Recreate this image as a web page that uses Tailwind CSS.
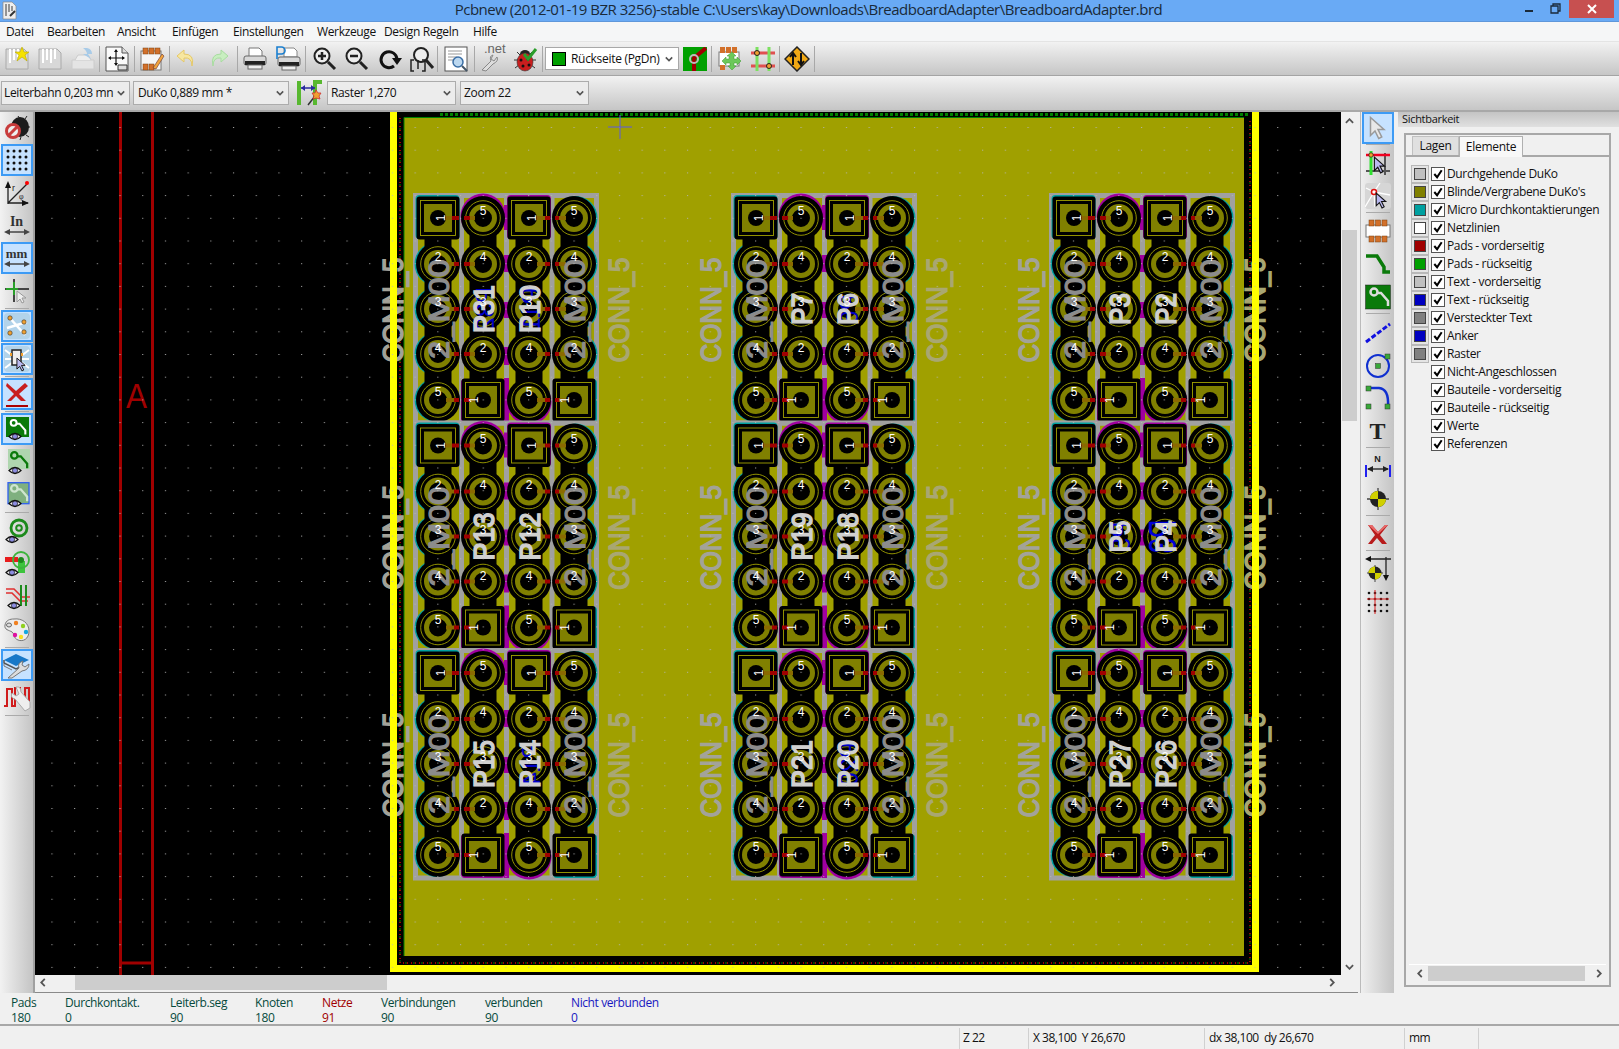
<!DOCTYPE html>
<html lang="de">
<head>
<meta charset="UTF-8">
<title>Pcbnew</title>
<script src="https://cdn.jsdelivr.net/npm/@tailwindcss/browser@4"></script>
</head>
<body class="w-[1619px] h-[1049px] overflow-hidden bg-[#f0f0f0] font-['Open_Sans','Noto_Sans',sans-serif] text-[#111]">

<svg class="hidden">
	<symbol id="chev" viewBox="0 0 10 6"><path d="M1 1l4 4 4-4" fill="none" stroke="#555" stroke-width="2"/></symbol>
	<symbol id="eye" viewBox="0 0 14 8"><path d="M1 4q6-6 12 0q-6 6-12 0z" fill="#fff" stroke="#111" stroke-width="1.2"/><circle cx="7" cy="4" r="2.6" fill="#8c8ce0" stroke="#111" stroke-width=".8"/></symbol>
	<symbol id="check" viewBox="0 0 13 13"><path d="M2.500 6.500l3 3.500 5-7.500" fill="none" stroke="#000" stroke-width="2.200"/></symbol>
	<symbol id="cursor" viewBox="0 0 12 16"><path d="M1 1v12l3-3 2.500 5 2-1-2.500-5h4z" fill="#b9b9f0" stroke="#111" stroke-width="1"/></symbol>
	<symbol id="pointer-light" viewBox="0 0 12 16"><path d="M1 1v12l3-3 2.500 5 2-1-2.500-5h4z" fill="#e8e8e8" stroke="#999" stroke-width="1"/></symbol>
	<symbol id="trace" viewBox="0 0 24 24"><circle cx="8" cy="7" r="3.500" fill="none" stroke="currentColor" stroke-width="2.500"/><path d="M12 8h3l7 8v5" fill="none" stroke="currentColor" stroke-width="2.500"/></symbol>
</svg>

<!-- Titelleiste -->
<div class="relative h-[22px] bg-[#69aaf5] border-b border-[#5f97da] flex items-center justify-center">
	<svg class="absolute left-[2px] top-[1px] w-[15px] h-[19px]" viewBox="0 0 15 19"><path d="M1 1h9l4 4v13H1z" fill="#eee" stroke="#888" stroke-width=".7"/><path d="M4 3v12M7 3v8M10 5v5" stroke="#777" stroke-width="1.500"/><path d="M8 15l5-5" stroke="#333" stroke-width="2"/></svg>
	<span class="text-[15px] tracking-[-0.5px] text-[#1a2a3a] relative top-[-1px] left-[-1px]">Pcbnew (2012-01-19 BZR 3256)-stable C:\Users\kay\Downloads\BreadboardAdapter\BreadboardAdapter.brd</span>
	<div class="absolute left-[1525px] top-[10px] w-[8px] h-[2px] bg-[#1a2a3a]"></div>
	<svg class="absolute left-[1550px] top-[3px] w-[11px] h-[11px]" viewBox="0 0 11 11"><path d="M3 3V1h7v7H8M1 3h7v7H1z" fill="none" stroke="#1a2a3a" stroke-width="1.300"/></svg>
	<div class="absolute left-[1569px] top-0 w-[45px] h-[18px] bg-[#c75050] flex items-center justify-center">
		<svg class="w-[10px] h-[10px]" viewBox="0 0 10 10"><path d="M1 1l8 8M9 1l-8 8" stroke="#fff" stroke-width="2"/></svg>
	</div>
</div>

<!-- Menue -->
<div class="h-[20px] bg-[#f5f6f7] border-b border-[#e4e4e4] flex items-center pl-[6px] text-[12px] tracking-[-0.35px]">
	<span class="w-[41px]">Datei</span>
	<span class="w-[70px]">Bearbeiten</span>
	<span class="w-[55px]">Ansicht</span>
	<span class="w-[61px]">Einfügen</span>
	<span class="w-[84px]">Einstellungen</span>
	<span class="w-[67px]">Werkzeuge</span>
	<span class="w-[89px]">Design Regeln</span>
	<span>Hilfe</span>
</div>

<!-- Hauptwerkzeugleiste -->
<div class="h-[34px] bg-gradient-to-b from-[#f2f2f2] to-[#c6c6c6] border-b border-[#a4a4a4] flex items-center">
	<div class="w-[33px] flex justify-center"><svg class="w-[26px] h-[26px]" viewBox="0 0 26 26"><path d="M2 3h18l4 4v16H2z" fill="#d8d8d8" stroke="#aaa"/><path d="M6 3v14M10 3v11M14 3v8" stroke="#fff" stroke-width="2"/><path d="M18 1l2 5h5l-4 3 2 6-5-4-5 4 2-6-4-3h5z" fill="#f5e200" stroke="#b8a800" stroke-width=".6"/></svg></div>
	<div class="w-[33px] flex justify-center"><svg class="w-[26px] h-[26px]" viewBox="0 0 26 26"><path d="M2 3h18l4 4v16H2z" fill="#d8d8d8" stroke="#aaa"/><path d="M6 3v14M10 3v11M14 3v14M18 3v10" stroke="#fff" stroke-width="2"/></svg></div>
	<div class="w-[33px] flex justify-center"><svg class="w-[26px] h-[26px]" viewBox="0 0 26 26"><path d="M2 14h22v9H2z" fill="#e4e4e4" stroke="#ccc"/><path d="M5 14l3-5h10l3 5" fill="#eee" stroke="#ccc"/><path d="M13 2h4q5 1 5 6h-4l3 5-8-5h4q0-3-4-6z" fill="#a8cbe8"/></svg></div>
	<div class="w-px h-[26px] bg-[#a8a8a8]"></div>
	<div class="w-[34px] flex justify-center"><svg class="w-[26px] h-[26px]" viewBox="0 0 26 26"><path d="M2 1h16l6 6v18H2z" fill="#fafafa" stroke="#555"/><path d="M18 1v6h6" fill="#ddd" stroke="#555"/><path d="M12 4v15M5 12h15" stroke="#111" stroke-width="1.200"/><path d="M12 3l-2 3h4zM12 20l-2-3h4zM4 12l3-2v4zM21 12l-3-2v4z" fill="#111"/><path d="M14 19h9v5h-9z" fill="#ddd" stroke="#333"/></svg></div>
	<div class="w-px h-[26px] bg-[#a8a8a8]"></div>
	<div class="w-[34px] flex justify-center"><svg class="w-[26px] h-[26px]" viewBox="0 0 26 26"><rect x="2" y="5" width="20" height="19" fill="#f6f6f6" stroke="#777"/><g fill="#d2702a" stroke="#7a4010" stroke-width=".5"><rect x="4" y="2" width="5" height="6"/><rect x="10" y="2" width="5" height="6"/><rect x="16" y="2" width="5" height="6"/><rect x="4" y="18" width="5" height="6"/><rect x="10" y="18" width="5" height="6"/></g><path d="M14 22l9-14 2 2-8 13z" fill="#f2a43c" stroke="#633" stroke-width=".6"/></svg></div>
	<div class="w-px h-[26px] bg-[#a8a8a8]"></div>
	<div class="w-[30px] ml-[1px] flex justify-center"><svg class="w-[24px] h-[24px]" viewBox="0 0 24 24"><path d="M10 3L3 9l7 6v-4q8-1 8 8 3-12-8-12z" fill="#f7e7a0" stroke="#e5c868"/></svg></div>
	<div class="w-[36px] flex justify-center"><svg class="w-[24px] h-[24px]" viewBox="0 0 24 24"><path d="M14 3l7 6-7 6v-4q-8-1-8 8-3-12 8-12z" fill="#c8eec0" stroke="#a8dca0"/></svg></div>
	<div class="w-px h-[26px] bg-[#a8a8a8]"></div>
	<div class="w-[33px] flex justify-center"><svg class="w-[26px] h-[26px]" viewBox="0 0 26 26"><path d="M7 2h10l3 3v6H7z" fill="#fff" stroke="#777"/><rect x="2" y="10" width="22" height="9" rx="2" fill="#d8d8d8" stroke="#666"/><rect x="3" y="15" width="20" height="4" fill="#222"/><rect x="6" y="19" width="14" height="4" fill="#eee" stroke="#666"/></svg></div>
	<div class="w-[34px] flex justify-center"><svg class="w-[26px] h-[26px]" viewBox="0 0 26 26"><path d="M9 2h10l3 3v6H9z" fill="#fff" stroke="#888"/><rect x="3" y="11" width="22" height="9" rx="2" fill="#d8d8d8" stroke="#666"/><rect x="4" y="16" width="20" height="4" fill="#222"/><rect x="7" y="20" width="14" height="4" fill="#eee" stroke="#666"/><path d="M2 13V1h4.500a3 3 0 0 1 0 7H2" fill="none" stroke="#1a7fd0" stroke-width="1.600"/></svg></div>
	<div class="w-px h-[26px] bg-[#a8a8a8]"></div>
	<div class="w-[34px] ml-[2px] flex justify-center"><svg class="w-[26px] h-[26px]" viewBox="0 0 26 26"><circle cx="10" cy="10" r="7.500" fill="#eee" stroke="#222" stroke-width="2"/><path d="M16 16l7 7" stroke="#222" stroke-width="3"/><path d="M6 10h8M10 6v8" stroke="#222" stroke-width="2.500"/></svg></div>
	<div class="w-[30px] flex justify-center"><svg class="w-[26px] h-[26px]" viewBox="0 0 26 26"><circle cx="10" cy="10" r="7.500" fill="#eee" stroke="#222" stroke-width="2"/><path d="M16 16l7 7" stroke="#222" stroke-width="3"/><path d="M6 10h8" stroke="#222" stroke-width="2.500"/></svg></div>
	<div class="w-[36px] flex justify-center"><svg class="w-[24px] h-[24px]" viewBox="0 0 24 24"><path d="M16 19A8 8 0 1 1 19 12" fill="none" stroke="#111" stroke-width="3"/><path d="M14 11h10l-5 7z" fill="#111"/></svg></div>
	<div class="w-[28px] flex justify-center"><svg class="w-[26px] h-[26px] shrink-0" viewBox="0 0 26 26"><circle cx="12" cy="9" r="7" fill="#eee" stroke="#222" stroke-width="2"/><path d="M17 14l7 8" stroke="#222" stroke-width="3"/><path d="M5 14H2v11h3M13 14h3v11h-3M9 14v9" fill="none" stroke="#222" stroke-width="1.500"/></svg></div>
	<div class="w-px h-[26px] bg-[#a8a8a8] ml-[1px]"></div>
	<div class="w-[34px] ml-[1px] flex justify-center"><svg class="w-[26px] h-[26px]" viewBox="0 0 26 26"><rect x="2" y="1" width="22" height="24" fill="#fff" stroke="#555"/><path d="M5 5h14M5 8h14M5 11h9M5 14h7" stroke="#999"/><circle cx="15" cy="16" r="5" fill="#bcd8f0" stroke="#3a6ea5" stroke-width="1.500"/><path d="M19 20l5 5" stroke="#456" stroke-width="2"/></svg></div>
	<div class="w-px h-[26px] bg-[#a8a8a8] ml-[1px]"></div>
	<div class="w-[33px] flex justify-center relative">
		<span class="absolute left-[9px] top-[-7px] text-[13px] font-['Liberation_Sans'] text-[#666]">.net</span>
		<svg class="w-[26px] h-[26px] relative" viewBox="0 0 26 26"><path d="M3 24l9-9q-2-5 2-6l-2 4 3 2 3-4q2 4-4 7l-7 7z" fill="#ddd" stroke="#888"/></svg>
	</div>
	<div class="w-[34px] flex justify-center"><svg class="w-[26px] h-[26px]" viewBox="0 0 26 26"><path d="M5 6l3 3M20 6l-3 3M2 14h4M24 14h-4M3 22l4-3M23 22l-4-3" stroke="#333"/><ellipse cx="13" cy="8" rx="5" ry="4" fill="#222"/><ellipse cx="13" cy="16" rx="8" ry="9" fill="#c81e1e" stroke="#333" stroke-width=".6"/><circle cx="9" cy="14" r="1.500" fill="#111"/><circle cx="16" cy="13" r="1.500" fill="#111"/><circle cx="11" cy="20" r="1.500" fill="#111"/><circle cx="17" cy="19" r="1.500" fill="#111"/><path d="M12 8l4 5 8-10" fill="none" stroke="#2a9d2a" stroke-width="3"/></svg></div>
	<div class="w-px h-[26px] bg-[#a8a8a8]"></div>
	<div class="w-[134px] h-[23px] ml-[2px] bg-white border border-[#a8a8a8] flex items-center pl-[6px]">
		<span class="w-[14px] h-[14px] bg-[#00a000] border border-black shrink-0"></span>
		<span class="text-[12px] tracking-[-0.3px] ml-[5px] flex-1 whitespace-nowrap">Rückseite (PgDn)</span>
		<svg class="w-[8px] h-[6px] mr-[5px]"><use href="#chev"/></svg>
	</div>
	<div class="ml-[4px] w-[24px] h-[24px]"><svg class="w-[24px] h-[24px]" viewBox="0 0 24 24"><rect width="24" height="24" fill="#00a000"/><path d="M11 24V11L23 1" fill="none" stroke="#a00000" stroke-width="4"/><circle cx="11" cy="12" r="4" fill="none" stroke="#bbb" stroke-width="2"/></svg></div>
	<div class="w-px h-[26px] bg-[#a8a8a8] ml-[4px]"></div>
	<div class="w-[33px] ml-[1px] flex justify-center"><svg class="w-[26px] h-[26px]" viewBox="0 0 26 26"><rect x="2" y="6" width="20" height="14" fill="#fff" stroke="#777"/><g fill="#d2702a"><rect x="3" y="1" width="5" height="6"/><rect x="9" y="1" width="5" height="6"/><rect x="15" y="1" width="5" height="6"/><rect x="3" y="19" width="5" height="5"/></g><path d="M15 6l4 4h-2v3h3v-2l4 4-4 4v-2h-3v3h2l-4 4-4-4h2v-3H9v2l-4-4 4-4v2h3v-3h-2z" fill="#6cc85a" stroke="#3c9a30" stroke-width=".5"/></svg></div>
	<div class="w-[33px] flex justify-center"><svg class="w-[26px] h-[26px]" viewBox="0 0 26 26"><path d="M1 7h24M1 20h24" stroke="#e05050" stroke-width="3"/><path d="M7 1v24M19 1v24" stroke="#7ce060" stroke-width="3"/><circle cx="7" cy="7" r="2.500" fill="#f0a030" stroke="#222"/><circle cx="19" cy="20" r="2.500" fill="#f0a030" stroke="#222"/></svg></div>
	<div class="w-px h-[26px] bg-[#a8a8a8]"></div>
	<div class="w-[34px] flex justify-center"><svg class="w-[26px] h-[26px]" viewBox="0 0 26 26"><path d="M13 1l12 12-12 12L1 13z" fill="#f0a814" stroke="#222" stroke-width="1.500"/><path d="M9 19V8M6 11l3-4 3 4M17 7v11M14 15l3 4 3-4" fill="none" stroke="#111" stroke-width="2"/></svg></div>
	<div class="w-px h-[26px] bg-[#a8a8a8]"></div>
</div>

<!-- Auswahlleiste -->
<div class="h-[34px] bg-gradient-to-b from-[#f2f2f2] to-[#c6c6c6] flex items-center pl-[1px] text-[12px] tracking-[-0.35px]">
	<div class="w-[129px] h-[24px] border border-[#acacac] bg-[#ececec] flex items-center pl-[2px] whitespace-nowrap"><span class="flex-1">Leiterbahn 0,203 mn</span><svg class="w-[8px] h-[6px] mx-[4px] shrink-0"><use href="#chev"/></svg></div>
	<div class="w-[156px] h-[24px] ml-[3px] border border-[#acacac] bg-[#ececec] flex items-center pl-[4px]"><span class="flex-1">DuKo 0,889 mm *</span><svg class="w-[8px] h-[6px] mx-[4px]"><use href="#chev"/></svg></div>
	<div class="w-[31px] ml-[5px] flex justify-center"><svg class="w-[26px] h-[26px]" viewBox="0 0 26 26"><path d="M2 1v24" stroke="#58b830" stroke-width="4"/><path d="M18 25V2h7" fill="none" stroke="#58b830" stroke-width="4"/><path d="M4 8h14" stroke="#2a2aa0" stroke-width="1.500"/><path d="M4 8l4-3v6zM18 8l-4-3v6z" fill="#2a2aa0"/><path d="M11 25l7-9" stroke="#333" stroke-width="1.500"/><path d="M19 10l2 3 3 0-2 3 1 3-4-1-3 1 1-3-2-3 3 0z" fill="#f0a030" stroke="#d03030" stroke-width=".8"/></svg></div>
	<div class="w-[129px] h-[24px] ml-[2px] border border-[#acacac] bg-[#ececec] flex items-center pl-[3px]"><span class="flex-1">Raster 1,270</span><svg class="w-[8px] h-[6px] mx-[4px]"><use href="#chev"/></svg></div>
	<div class="w-[129px] h-[24px] ml-[4px] border border-[#acacac] bg-[#ececec] flex items-center pl-[3px]"><span class="flex-1">Zoom 22</span><svg class="w-[8px] h-[6px] mx-[4px]"><use href="#chev"/></svg></div>
</div>

<!-- Arbeitsbereich -->
<div class="h-[883px] flex border-t-2 border-[#a8a8a8]">
	<!-- linke Leiste -->
	<div class="w-[33px] h-[881px] bg-gradient-to-r from-[#f2f2f2] to-[#c4c4c4] flex flex-col items-center shrink-0">
		<div class="h-[32px] w-[33px] flex items-center justify-center"><svg class="w-[26px] h-[26px]" viewBox="0 0 26 26"><path d="M14 1l2 3M23 1l-2 3M26 12h-3M25 22l-3-2M16 25l1-3" stroke="#222"/><ellipse cx="16" cy="12" rx="9" ry="10" fill="#1c1c1c"/><circle cx="9" cy="16" r="6.500" fill="#eee" stroke="#c83c3c" stroke-width="3"/><path d="M4 21l10-10" stroke="#c83c3c" stroke-width="3"/></svg></div>
		<div class="h-[32px] w-[32px] bg-[#c6e2ff] border-2 border-[#3d9bf5] flex items-center justify-center"><svg class="w-[24px] h-[24px]" viewBox="0 0 24 24" fill="#111"><circle cx="3" cy="3" r="1.500"/><circle cx="9" cy="3" r="1.500"/><circle cx="15" cy="3" r="1.500"/><circle cx="21" cy="3" r="1.500"/><circle cx="3" cy="9" r="1.500"/><circle cx="9" cy="9" r="1.500"/><circle cx="15" cy="9" r="1.500"/><circle cx="21" cy="9" r="1.500"/><circle cx="3" cy="15" r="1.500"/><circle cx="9" cy="15" r="1.500"/><circle cx="15" cy="15" r="1.500"/><circle cx="21" cy="15" r="1.500"/><circle cx="3" cy="21" r="1.500"/><circle cx="9" cy="21" r="1.500"/><circle cx="15" cy="21" r="1.500"/><circle cx="21" cy="21" r="1.500"/></svg></div>
		<div class="h-[33px] w-[33px] flex items-center justify-center"><svg class="w-[26px] h-[26px]" viewBox="0 0 26 26"><path d="M4 24V4M4 23h20M4 23L23 4" fill="none" stroke="#222" stroke-width="1.300"/><path d="M4 1l-3 7h6zM25 23l-7-3v6z" fill="#111"/><circle cx="23" cy="3" r="2" fill="#f00"/><text x="8" y="11" font-size="9" font-family="Liberation Sans" fill="#222">r</text><text x="15" y="19" font-size="8" font-family="Liberation Serif" fill="#222">φ</text></svg></div>
		<div class="h-[33px] w-[33px] flex flex-col items-center justify-center"><span class="font-['Liberation_Serif'] font-bold text-[14px] leading-[13px] text-[#333]">In</span><svg class="w-[26px] h-[8px]" viewBox="0 0 26 8"><path d="M5 4h16" stroke="#444" stroke-width="1.500"/><path d="M0 4l6-3v6zM26 4l-6-3v6z" fill="#444"/></svg></div>
		<div class="h-[32px] w-[32px] bg-[#c6e2ff] border-2 border-[#3d9bf5] flex flex-col items-center justify-center"><span class="font-['Liberation_Serif'] font-bold text-[13px] leading-[12px] text-[#333]">mm</span><svg class="w-[26px] h-[8px]" viewBox="0 0 26 8"><path d="M5 4h16" stroke="#444" stroke-width="1.500"/><path d="M0 4l6-3v6zM26 4l-6-3v6z" fill="#444"/></svg></div>
		<div class="h-[33px] w-[33px] flex items-center justify-center relative"><svg class="w-[26px] h-[26px]" viewBox="0 0 26 26"><path d="M10 1v23M1 11h24" stroke="#444" stroke-width="2"/><path d="M10 4v13M2 11h12" stroke="#2aa02a" stroke-width="2"/><path d="M13 13v11l3-3 2 4 2-1-2-4h4z" fill="#eee" stroke="#999"/></svg></div>
		<div class="h-[1px] w-[24px] my-[1px] bg-[#aaa]"></div>
		<div class="h-[32px] w-[32px] bg-[#c6e2ff] border-2 border-[#3d9bf5] flex items-center justify-center"><svg class="w-[26px] h-[26px]" viewBox="0 0 26 26"><rect x="0" y="0" width="26" height="26" rx="4" fill="#b2d3ea"/><path d="M5 4l16 18M3 15L23 9" stroke="#fff" stroke-width="2.500"/><circle cx="6" cy="5" r="2.200" fill="#f0a030" stroke="#333" stroke-width=".6"/><circle cx="20" cy="9" r="2.200" fill="#f0a030" stroke="#333" stroke-width=".6"/><circle cx="6" cy="20" r="2.200" fill="#f0a030" stroke="#333" stroke-width=".6"/><circle cx="20" cy="19" r="2.200" fill="#f0a030" stroke="#333" stroke-width=".6"/></svg></div>
		<div class="h-[32px] w-[32px] mt-[1px] bg-[#c6e2ff] border-2 border-[#3d9bf5] flex items-center justify-center"><svg class="w-[26px] h-[26px]" viewBox="0 0 26 26"><rect x="0" y="0" width="26" height="26" rx="4" fill="#b2d3ea"/><path d="M1 4l24 18M1 22L25 4M1 13h24" stroke="#fff" stroke-width="2"/><rect x="8" y="4" width="9" height="15" fill="#eee" stroke="#222" stroke-width="1.500"/><g fill="#f0a030"><rect x="6" y="7" width="2" height="3"/><rect x="17" y="7" width="2" height="3"/></g><use href="#cursor" x="12" y="11" width="11" height="15"/></svg></div>
		<div class="h-[1px] w-[24px] my-[1px] bg-[#aaa]"></div>
		<div class="h-[32px] w-[32px] bg-[#c6e2ff] border-2 border-[#3d9bf5] flex items-center justify-center"><svg class="w-[26px] h-[26px]" viewBox="0 0 26 26"><path d="M3 2l9 8 9-8 3 3-9 8 7 7h-5l-5-5-5 5H3l7-7-8-8z" fill="#c81e1e"/><path d="M2 25h22" stroke="#a00" stroke-width="2"/></svg></div>
		<div class="h-[1px] w-[24px] my-[1px] bg-[#aaa]"></div>
		<div class="h-[32px] w-[32px] bg-[#c6e2ff] border-2 border-[#3d9bf5] flex items-center justify-center relative"><svg class="w-[24px] h-[24px] text-white" viewBox="0 0 24 24"><rect width="23" height="20" x="1" fill="#0a7a0a"/><use href="#trace" width="24" height="20"/><use href="#eye" x="3" y="15" width="14" height="9"/></svg></div>
		<div class="h-[33px] w-[33px] flex items-center justify-center"><svg class="w-[26px] h-[26px] text-[#0a7a0a]" viewBox="0 0 26 26"><rect x="4" y="0" width="22" height="20" fill="#afd6af"/><use href="#trace" x="2" width="24" height="22"/><use href="#eye" x="4" y="17" width="14" height="9"/></svg></div>
		<div class="h-[33px] w-[33px] flex items-center justify-center"><svg class="w-[26px] h-[26px] text-[#cfe5cf]" viewBox="0 0 26 26"><rect x="4" y=".7" width="21" height="21" fill="#7fb07f" stroke="#3060f0" stroke-width="1.300"/><use href="#trace" x="2" width="24" height="22"/><use href="#eye" x="4" y="17" width="14" height="9"/></svg></div>
		<div class="h-[1px] w-[24px] my-[1px] bg-[#aaa]"></div>
		<div class="h-[33px] w-[33px] flex items-center justify-center"><svg class="w-[26px] h-[26px]" viewBox="0 0 26 26"><circle cx="15" cy="10" r="8" fill="none" stroke="#1c8a1c" stroke-width="2.800"/><circle cx="15" cy="10" r="2.800" fill="none" stroke="#1c8a1c" stroke-width="2"/><use href="#eye" x="1" y="17" width="14" height="9"/></svg></div>
		<div class="h-[33px] w-[33px] flex items-center justify-center"><svg class="w-[26px] h-[26px]" viewBox="0 0 26 26"><rect x="1" y="6" width="13" height="5" fill="#e81c1c"/><rect x="14" y="10" width="7" height="12" fill="#3cc43c"/><circle cx="17" cy="9" r="8" fill="none" stroke="#3cb43c" stroke-width="1.800"/><circle cx="17" cy="9" r="3" fill="#1c8a1c"/><use href="#eye" x="1" y="17" width="14" height="9"/></svg></div>
		<div class="h-[33px] w-[33px] flex items-center justify-center"><svg class="w-[26px] h-[26px]" viewBox="0 0 26 26"><path d="M2 5h8l8 8h8M2 9h6l8 8h8" fill="none" stroke="#e03030" stroke-width="1.600"/><path d="M17 1v21M22 1v21" stroke="#1c8a1c" stroke-width="2"/><use href="#eye" x="3" y="17" width="14" height="9"/></svg></div>
		<div class="h-[33px] w-[33px] flex items-center justify-center"><svg class="w-[26px] h-[26px]" viewBox="0 0 26 26"><path d="M10 2c8-1 15 4 15 12s-6 11-11 9-3-6-6-8-8-2-7-7 5-6 9-6z" fill="#ededed" stroke="#777"/><ellipse cx="5" cy="8" rx="2.500" ry="2" fill="#ddd" stroke="#666"/><circle cx="12" cy="6" r="2.200" fill="#f08020"/><circle cx="19" cy="9" r="2.200" fill="#90d020"/><circle cx="22" cy="15" r="2.200" fill="#10a8e0"/><circle cx="17" cy="20" r="2.200" fill="#f8e020"/><circle cx="11" cy="18" r="2.200" fill="#e010a0"/></svg></div>
		<div class="h-[1px] w-[24px] my-[1px] bg-[#aaa]"></div>
		<div class="h-[32px] w-[32px] bg-[#c6e2ff] border-2 border-[#3d9bf5] flex items-center justify-center"><svg class="w-[28px] h-[28px]" viewBox="0 0 28 28"><path d="M1 9l12-6 13 6-13 6z" fill="#1878c8"/><path d="M1 9v3l12 6 6-3" fill="none" stroke="#555" stroke-width="1.500"/><path d="M1 13v2l8 4" stroke="#777" fill="none"/><path d="M5 27l11-10q-2-5 4-7l-1 4 3 2 4-3q0 6-7 7L9 27z" fill="#ddd" stroke="#777"/></svg></div>
		<div class="h-[33px] w-[33px] flex items-center justify-center"><svg class="w-[28px] h-[28px]" viewBox="0 0 28 28"><path d="M1 22h3V5h5v17h3V4h5v10M22 20V4h4v16" fill="none" stroke="#d01c1c" stroke-width="2"/><path d="M13 3q5-1 5 5l9 10v6l-5 3-10-12q-5-1-3-6l4 3 3-2z" fill="#eee" stroke="#aaa"/></svg></div>
		<div class="h-[1px] w-[24px] my-[1px] bg-[#aaa]"></div>
	</div>
	<div class="w-[2px] bg-[#a0a0a0] shrink-0"></div>

	<!-- Zeichenflaeche mit Rollbalken -->
	<div class="w-[1323px] shrink-0 flex flex-col border-b border-[#8a8a8a]">
		<div class="flex h-[863px]">
			<svg class="block w-[1306px] h-[863px] bg-black shrink-0" viewBox="35 112 1306 863" font-family="Liberation Sans">
				<defs>
					<pattern id="grid" x="41.500" y="127" width="22.700" height="22.700" patternUnits="userSpaceOnUse"><rect x="10" width="1" height="1" fill="#b8b8b8"/></pattern>
					<g id="pad"><circle r="22" fill="#000"/><circle r="17.300" fill="none" stroke="#a0a000" stroke-width=".9"/><circle r="11.500" fill="none" stroke="#808000" stroke-width="5"/></g>
					<g id="sq"><rect x="-21.500" y="-21.500" width="43" height="43" rx="3" fill="#000"/><rect x="-17.500" y="-17.500" width="35" height="35" fill="none" stroke="#a0a000" stroke-width=".9"/><rect x="-14" y="-14" width="28" height="28" fill="#808000"/><circle r="8" fill="#000"/></g>
					<!-- eine Adapterplatine, Koordinaten der ersten -->
					<g id="block">
						<rect x="415.500" y="195.500" width="181" height="227.500" fill="none" stroke="#a0a0a0" stroke-width="5"/>
						<path d="M461.500 195v228M506.500 195v228M552 195v228" stroke="#a0a0a0" stroke-width="5"/>
						<g fill="#a000a0"><rect x="504" y="205" width="5" height="25"/><rect x="504" y="255" width="5" height="17"/><rect x="504" y="302" width="5" height="16"/><rect x="504" y="347" width="5" height="18"/><rect x="504" y="378" width="5" height="45"/></g>
						<g fill="#00a0a0"><circle cx="436.500" cy="264" r="22"/><circle cx="436.500" cy="309" r="22"/><circle cx="436.500" cy="354" r="22"/><circle cx="436.500" cy="400" r="22"/><circle cx="575.500" cy="218" r="22"/><circle cx="575.500" cy="264" r="22"/><circle cx="575.500" cy="309" r="22"/><circle cx="575.500" cy="354" r="22"/><rect x="415.500" y="195" width="44" height="44" rx="4"/><rect x="553" y="379" width="44" height="44" rx="4"/></g>
						<g fill="#a000a0"><circle cx="483" cy="216" r="22.500"/><rect x="507" y="195" width="44" height="44" rx="4"/><circle cx="529" cy="402" r="22.500"/><rect x="461" y="379" width="44" height="44" rx="4"/></g>
						<path d="M438 218v182M483 218v182M529 218v182M574 218v182" stroke="#000" stroke-width="27"/>
						<use href="#sq" x="438" y="218"/><use href="#pad" x="438" y="264"/><use href="#pad" x="438" y="309"/><use href="#pad" x="438" y="354"/><use href="#pad" x="438" y="400"/>
						<use href="#pad" x="483" y="218"/><use href="#pad" x="483" y="264"/><use href="#pad" x="483" y="309"/><use href="#pad" x="483" y="354"/><use href="#sq" x="483" y="400"/>
						<use href="#sq" x="529" y="218"/><use href="#pad" x="529" y="264"/><use href="#pad" x="529" y="309"/><use href="#pad" x="529" y="354"/><use href="#pad" x="529" y="400"/>
						<use href="#pad" x="574" y="218"/><use href="#pad" x="574" y="264"/><use href="#pad" x="574" y="309"/><use href="#pad" x="574" y="354"/><use href="#sq" x="574" y="400"/>
						<g stroke="#8a6a00" stroke-width="4"><path d="M446 218h6M446 264h8M446 309h8M446 354h8M446 400h8M475 218h-6M475 264h-6M475 309h-6M475 354h-6M475 400h-6M537 218h8M537 264h8M537 309h8M537 354h8M537 400h8M566 218h-8M566 264h-8M566 309h-8M566 354h-8M566 400h-8"/></g>
						<g stroke="#a00000" stroke-width="4"><path d="M452 218h7M454 264h5M454 309h5M454 354h5M454 400h5M464 218h6M464 264h6M464 309h6M464 354h6M464 400h6M545 218h5M545 264h5M545 309h5M545 354h5M545 400h5M555 218h4M555 264h4M555 309h4M555 354h4M555 400h4"/></g>
						<g font-size="30"><text transform="translate(403,310) rotate(-90)" text-anchor="middle" textLength="105" lengthAdjust="spacingAndGlyphs" fill="#a3a399" stroke="#a3a399" stroke-width="1.500">CONN_5</text><text transform="translate(629,310) rotate(-90)" text-anchor="middle" textLength="105" lengthAdjust="spacingAndGlyphs" fill="#a9a772" stroke="#a9a772" stroke-width="1.500">CONN_5</text></g>
						<g fill="#8c8c8c" stroke="#8c8c8c" stroke-width="1.200" font-size="30"><text transform="translate(449,309) rotate(-90)" text-anchor="middle" textLength="100" lengthAdjust="spacingAndGlyphs">2_M00</text><text transform="translate(585,309) rotate(-90)" text-anchor="middle" textLength="100" lengthAdjust="spacingAndGlyphs">2_M00</text></g>
					</g>
					<g id="digits" fill="#fff" font-size="12" text-anchor="middle">
						<text transform="translate(445,218) rotate(-90)">1</text><text x="438" y="261">2</text><text x="438" y="306">3</text><text x="438" y="352">4</text><text x="438" y="396">5</text>
						<text x="483" y="215">5</text><text x="483" y="261">4</text><text x="483" y="306">3</text><text x="483" y="352">2</text><text transform="translate(478,400) rotate(-90)">1</text>
						<text transform="translate(536,218) rotate(-90)">1</text><text x="529" y="261">2</text><text x="529" y="306">3</text><text x="529" y="352">4</text><text x="529" y="396">5</text>
						<text x="574" y="215">5</text><text x="574" y="261">4</text><text x="574" y="306">3</text><text x="574" y="352">2</text><text transform="translate(569,400) rotate(-90)">1</text>
					</g>
				</defs>

				<!-- rahmen links -->
				<path d="M120.500 112v863M152.500 112v863M120 963h33" fill="none" stroke="#a00000" stroke-width="3"/>
				<text x="126" y="408" font-size="35" fill="#a00000" textLength="21" lengthAdjust="spacingAndGlyphs">A</text>

				<!-- platine -->
				<rect x="404" y="117" width="840" height="839" fill="#a0a000"/>
				<path d="M404 956V117.500H1244" fill="none" stroke="#008000" stroke-width="1"/>
				<path d="M400 118V963H1250V118" fill="none" stroke="#a00000" stroke-width="2" stroke-dasharray="1 3"/>
				<path d="M400 120V963H1250V120" fill="none" stroke="#008000" stroke-width="1" stroke-dasharray="2 6"/>
				<path d="M440 114.500H1250" stroke="#008000" stroke-width="3" stroke-dasharray="3 2"/>

				<g><use href="#block"/><g fill="#0000c8" font-size="26"><text transform="translate(494,309) rotate(-90) scale(-1,1)" text-anchor="middle" textLength="44" lengthAdjust="spacingAndGlyphs">P32</text><text transform="translate(540,309) rotate(-90) scale(-1,1)" text-anchor="middle" textLength="44" lengthAdjust="spacingAndGlyphs">P11</text></g><g fill="#d0d0d0" stroke="#d0d0d0" stroke-width="1.500" font-size="30"><text transform="translate(494,309) rotate(-90)" text-anchor="middle" textLength="48" lengthAdjust="spacingAndGlyphs">P31</text><text transform="translate(540,309) rotate(-90)" text-anchor="middle" textLength="48" lengthAdjust="spacingAndGlyphs">P10</text></g><use href="#digits"/></g>
				<g transform="translate(0,227.500)"><use href="#block"/><g fill="#d0d0d0" stroke="#d0d0d0" stroke-width="1.500" font-size="30"><text transform="translate(494,309) rotate(-90)" text-anchor="middle" textLength="48" lengthAdjust="spacingAndGlyphs">P13</text><text transform="translate(540,309) rotate(-90)" text-anchor="middle" textLength="48" lengthAdjust="spacingAndGlyphs">P12</text></g><use href="#digits"/></g>
				<g transform="translate(0,455)"><use href="#block"/><g fill="#0000c8" font-size="26"><text transform="translate(540,309) rotate(-90) scale(-1,1)" text-anchor="middle" textLength="44" lengthAdjust="spacingAndGlyphs">P14</text></g><g fill="#d0d0d0" stroke="#d0d0d0" stroke-width="1.500" font-size="30"><text transform="translate(494,309) rotate(-90)" text-anchor="middle" textLength="48" lengthAdjust="spacingAndGlyphs">P15</text><text transform="translate(540,309) rotate(-90)" text-anchor="middle" textLength="48" lengthAdjust="spacingAndGlyphs">P14</text></g><use href="#digits"/></g>
				<g transform="translate(318,0)"><use href="#block"/><g fill="#0000c8" font-size="26"><text transform="translate(540,309) rotate(-90) scale(-1,1)" text-anchor="middle" textLength="30" lengthAdjust="spacingAndGlyphs">P6</text></g><g fill="#d0d0d0" stroke="#d0d0d0" stroke-width="1.500" font-size="30"><text transform="translate(494,309) rotate(-90)" text-anchor="middle" textLength="32" lengthAdjust="spacingAndGlyphs">P7</text><text transform="translate(540,309) rotate(-90)" text-anchor="middle" textLength="32" lengthAdjust="spacingAndGlyphs">P6</text></g><use href="#digits"/></g>
				<g transform="translate(318,227.500)"><use href="#block"/><g fill="#d0d0d0" stroke="#d0d0d0" stroke-width="1.500" font-size="30"><text transform="translate(494,309) rotate(-90)" text-anchor="middle" textLength="48" lengthAdjust="spacingAndGlyphs">P19</text><text transform="translate(540,309) rotate(-90)" text-anchor="middle" textLength="48" lengthAdjust="spacingAndGlyphs">P18</text></g><use href="#digits"/></g>
				<g transform="translate(318,455)"><use href="#block"/><g fill="#0000c8" font-size="26"><text transform="translate(540,309) rotate(-90) scale(-1,1)" text-anchor="middle" textLength="44" lengthAdjust="spacingAndGlyphs">P20</text></g><g fill="#d0d0d0" stroke="#d0d0d0" stroke-width="1.500" font-size="30"><text transform="translate(494,309) rotate(-90)" text-anchor="middle" textLength="48" lengthAdjust="spacingAndGlyphs">P21</text><text transform="translate(540,309) rotate(-90)" text-anchor="middle" textLength="48" lengthAdjust="spacingAndGlyphs">P20</text></g><use href="#digits"/></g>
				<g transform="translate(636,0)"><use href="#block"/><g fill="#d0d0d0" stroke="#d0d0d0" stroke-width="1.500" font-size="30"><text transform="translate(494,309) rotate(-90)" text-anchor="middle" textLength="32" lengthAdjust="spacingAndGlyphs">P3</text><text transform="translate(540,309) rotate(-90)" text-anchor="middle" textLength="32" lengthAdjust="spacingAndGlyphs">P2</text></g><use href="#digits"/></g>
				<g transform="translate(636,227.500)"><use href="#block"/><g fill="#0000d8" font-size="26"><text transform="translate(494,309) rotate(-90) scale(-1,1)" text-anchor="middle" textLength="30" lengthAdjust="spacingAndGlyphs">P5</text><text transform="translate(540,309) rotate(-90) scale(-1,1.500)" text-anchor="middle" textLength="34" lengthAdjust="spacingAndGlyphs">P3</text></g><g fill="#d0d0d0" stroke="#d0d0d0" stroke-width="1.500" font-size="30"><text transform="translate(494,309) rotate(-90)" text-anchor="middle" textLength="32" lengthAdjust="spacingAndGlyphs">P5</text><text transform="translate(540,309) rotate(-90)" text-anchor="middle" textLength="32" lengthAdjust="spacingAndGlyphs">P4</text></g><use href="#digits"/></g>
				<g transform="translate(636,455)"><use href="#block"/><g fill="#d0d0d0" stroke="#d0d0d0" stroke-width="1.500" font-size="30"><text transform="translate(494,309) rotate(-90)" text-anchor="middle" textLength="48" lengthAdjust="spacingAndGlyphs">P27</text><text transform="translate(540,309) rotate(-90)" text-anchor="middle" textLength="48" lengthAdjust="spacingAndGlyphs">P26</text></g><use href="#digits"/></g>

				<!-- randkontur -->
				<rect x="393.500" y="100" width="862" height="868.500" fill="none" stroke="#ffff00" stroke-width="7"/>
				<rect x="35" y="112" width="1306" height="863" fill="url(#grid)"/>
				<path d="M620 115v24M608 127h24" stroke="#5a5ae0" stroke-width="1"/>
			</svg>
			<!-- senkrechter Rollbalken -->
			<div class="w-[17px] bg-[#f0f0f0] relative">
				<svg class="absolute left-[4px] top-[6px] w-[9px] h-[6px] rotate-180"><use href="#chev"/></svg>
				<div class="absolute left-[1px] top-[118px] w-[15px] h-[191px] bg-[#cdcdcd]"></div>
				<svg class="absolute left-[4px] bottom-[5px] w-[9px] h-[6px]"><use href="#chev"/></svg>
			</div>
		</div>
		<!-- waagrechter Rollbalken -->
		<div class="h-[17px] relative bg-[#f0f0f0]">
			<svg class="absolute left-[5px] top-[3px] w-[6px] h-[9px]" viewBox="0 0 6 10"><path d="M5 1L1 5l4 4" fill="none" stroke="#555" stroke-width="2"/></svg>
			<div class="absolute left-[40px] top-0 w-[312px] h-[15px] bg-[#cdcdcd]"></div>
			<svg class="absolute left-[1294px] top-[3px] w-[6px] h-[9px]" viewBox="0 0 6 10"><path d="M1 1l4 4-4 4" fill="none" stroke="#555" stroke-width="2"/></svg>
		</div>
	</div>

	<!-- rechte Leiste -->
	<div class="w-[2px] shrink-0"></div>
	<div class="w-[34px] shrink-0 bg-gradient-to-r from-[#efefef] to-[#c4c4c4] flex flex-col items-center border-l border-[#bbb]">
		<div class="h-[32px] w-[32px] bg-[#c6e2ff] border-2 border-[#3d9bf5] flex items-center justify-center"><svg class="w-[18px] h-[24px]"><use href="#pointer-light"/></svg></div>
		<div class="h-[2px] w-[24px] border-t border-[#aaa]"></div>
		<div class="h-[33px] w-[33px] flex items-center justify-center"><svg class="w-[26px] h-[26px]" viewBox="0 0 26 26"><path d="M1 21h24" stroke="#555" stroke-width="2"/><path d="M20 3v22" stroke="#555" stroke-width="2"/><path d="M1 5h24" stroke="#f00020" stroke-width="2.500"/><path d="M6 1v24" stroke="#30e030" stroke-width="3"/><circle cx="6" cy="5" r="2.200" fill="#f0a030" stroke="#222" stroke-width=".7"/><use href="#cursor" x="8" y="6" width="14" height="18"/></svg></div>
		<div class="h-[33px] w-[33px] flex items-center justify-center"><svg class="w-[26px] h-[26px]" viewBox="0 0 26 26"><rect width="26" height="26" rx="3" fill="#d6d6d6"/><path d="M0 24L9 9M9 9l-8-4M9 9l6-9M9 9l16 3M9 9l1 15" stroke="#fff" stroke-width="1.300"/><circle cx="9" cy="9" r="2.500" fill="#fff" stroke="#e01010" stroke-width="1.500"/><use href="#cursor" x="10" y="9" width="13" height="17"/></svg></div>
		<div class="h-[2px] w-[24px] border-t border-[#aaa]"></div>
		<div class="h-[33px] w-[33px] flex items-center justify-center"><svg class="w-[26px] h-[26px]" viewBox="0 0 26 26"><rect x="1" y="7" width="24" height="12" fill="#fff" stroke="#777"/><g fill="#d2702a" stroke="#7a4010" stroke-width=".5"><rect x="4" y="2" width="5" height="6"/><rect x="10.500" y="2" width="5" height="6"/><rect x="17" y="2" width="5" height="6"/><rect x="4" y="18" width="5" height="6"/><rect x="10.500" y="18" width="5" height="6"/><rect x="17" y="18" width="5" height="6"/></g></svg></div>
		<div class="h-[33px] w-[33px] flex items-center justify-center"><svg class="w-[26px] h-[26px]" viewBox="0 0 26 26"><path d="M1 5h11l7 11v5h6" fill="none" stroke="#0a7a0a" stroke-width="3.500"/></svg></div>
		<div class="h-[33px] w-[33px] flex items-center justify-center"><svg class="w-[26px] h-[26px] text-[#ddd]" viewBox="0 0 26 26"><rect width="25" height="24" x=".5" y="1" fill="#0a7a0a" stroke="#222" stroke-width=".5"/><use href="#trace" x="1" y="1" width="24" height="24"/></svg></div>
		<div class="h-[2px] w-[24px] border-t border-[#aaa]"></div>
		<div class="h-[33px] w-[33px] flex items-center justify-center"><svg class="w-[26px] h-[26px]" viewBox="0 0 26 26"><path d="M1 23L25 5" stroke="#1010e0" stroke-width="3" stroke-dasharray="5 2"/></svg></div>
		<div class="h-[33px] w-[33px] flex items-center justify-center"><svg class="w-[26px] h-[26px]" viewBox="0 0 26 26"><circle cx="13" cy="14" r="11" fill="none" stroke="#1030d0" stroke-width="2"/><rect x="10.500" y="11.500" width="5" height="5" fill="#38a838" stroke="#333" stroke-width=".5"/><rect x="20" y="2" width="5" height="5" fill="#38a838" stroke="#333" stroke-width=".5"/></svg></div>
		<div class="h-[33px] w-[33px] flex items-center justify-center"><svg class="w-[26px] h-[26px]" viewBox="0 0 26 26"><path d="M4 3h10q10 1 9 18" fill="none" stroke="#1030d0" stroke-width="2.500"/><rect x="1" y="1" width="5" height="5" fill="#38a838" stroke="#333" stroke-width=".5"/><rect x="1" y="19" width="5" height="5" fill="#38a838" stroke="#333" stroke-width=".5"/><rect x="20" y="19" width="5" height="5" fill="#38a838" stroke="#333" stroke-width=".5"/></svg></div>
		<div class="h-[33px] w-[33px] flex items-center justify-center font-['Liberation_Serif'] font-bold text-[24px] text-[#222]">T</div>
		<div class="h-[2px] w-[24px] border-t border-[#aaa]"></div>
		<div class="h-[33px] w-[33px] flex flex-col items-center justify-center relative"><span class="font-['Liberation_Sans'] font-bold text-[9px] leading-[10px] text-[#222]">N</span><svg class="w-[26px] h-[14px]" viewBox="0 0 26 14"><path d="M1 1v12M25 1v12" stroke="#2020f0" stroke-width="2"/><path d="M3 5h20" stroke="#333" stroke-width="1.500"/><path d="M2 5l6-3v6zM24 5l-6-3v6z" fill="#222"/></svg></div>
		<div class="h-[33px] w-[33px] flex items-center justify-center"><svg class="w-[24px] h-[24px]" viewBox="0 0 24 24"><path d="M12 1v22M1 12h22" stroke="#444" stroke-width="1.300"/><circle cx="12" cy="12" r="8" fill="#222"/><path d="M12 4a8 8 0 0 0-8 8h8zM12 20a8 8 0 0 0 8-8h-8z" fill="#d0d000"/></svg></div>
		<div class="h-[2px] w-[24px] border-t border-[#aaa]"></div>
		<div class="h-[33px] w-[33px] flex items-center justify-center"><svg class="w-[24px] h-[24px]" viewBox="0 0 24 24"><path d="M2 3h4l6 7 7-7h3l-8 10 7 9h-5l-5-6-5 6H2l7-9z" fill="#b81c1c"/><path d="M2 3h4l6 7 7-7h3l-10 9z" fill="#e86868"/></svg></div>
		<div class="h-[2px] w-[24px] border-t border-[#aaa]"></div>
		<div class="h-[33px] w-[33px] flex items-center justify-center"><svg class="w-[26px] h-[26px]" viewBox="0 0 26 26"><path d="M3 3h23M21 1v21" stroke="#222" stroke-width="1.300"/><path d="M0 3l6-3v6zM21 25l-3-6h6z" fill="#111"/><path d="M10 9v18M2 17h16" stroke="#444"/><circle cx="10" cy="17" r="6.500" fill="#222"/><path d="M10 10.500a6.500 6.500 0 0 0-6.500 6.500H10zM10 23.500a6.500 6.500 0 0 0 6.500-6.500H10z" fill="#d0d000"/></svg></div>
		<div class="h-[33px] w-[33px] flex items-center justify-center"><svg class="w-[24px] h-[24px]" viewBox="0 0 24 24"><g fill="#111"><circle cx="3" cy="3" r="1.300"/><circle cx="9" cy="3" r="1.300"/><circle cx="15" cy="3" r="1.300"/><circle cx="21" cy="3" r="1.300"/><circle cx="3" cy="9" r="1.300"/><circle cx="9" cy="9" r="1.300"/><circle cx="15" cy="9" r="1.300"/><circle cx="21" cy="9" r="1.300"/><circle cx="3" cy="15" r="1.300"/><circle cx="9" cy="15" r="1.300"/><circle cx="15" cy="15" r="1.300"/><circle cx="21" cy="15" r="1.300"/><circle cx="3" cy="21" r="1.300"/><circle cx="9" cy="21" r="1.300"/><circle cx="15" cy="21" r="1.300"/><circle cx="21" cy="21" r="1.300"/></g><path d="M1 9h22M9 0v24" stroke="#e02020"/></svg></div>
	</div>

	<!-- Sichtbarkeit -->
	<div class="w-[4px] shrink-0"></div>
	<div class="flex-1 flex flex-col">
		<div class="h-[15px] bg-gradient-to-b from-[#c4c4c4] to-[#e0e0e0] text-[11px] leading-[13px] pl-[4px] tracking-[-0.3px]">Sichtbarkeit</div>
		<div class="ml-[6px] mr-[8px] mt-[6px] h-[854px] border-2 border-[#a8a8a8] flex flex-col relative">
			<div class="h-[22px] flex items-end pl-[6px] border-b-2 border-[#a8a8a8] text-[12px] tracking-[-0.3px]">
				<div class="w-[47px] h-[19px] bg-[#e0e0e0] border border-b-0 border-[#c0c0c0] flex items-center justify-center">Lagen</div>
				<div class="w-[64px] h-[21px] bg-[#f8f8f8] border border-b-0 border-[#b0b0b0] flex items-center justify-center mb-[-2px]">Elemente</div>
			</div>
			<div class="pt-[8px] pl-[5px] flex flex-col text-[12px] tracking-[-0.35px] leading-[18px]">
				<div class="flex h-[18px] items-center"><span class="w-[18px] h-[18px] bg-[#e4e4e4] border border-[#b8b8b8] flex items-center justify-center"><span class="w-[12px] h-[12px] border border-[#444] bg-[#c0c0c0]"></span></span><span class="w-[14px] h-[14px] ml-[2px] bg-white border border-[#555]"><svg class="w-[12px] h-[12px]"><use href="#check"/></svg></span><span class="ml-[2px]">Durchgehende DuKo</span></div>
				<div class="flex h-[18px] items-center"><span class="w-[18px] h-[18px] bg-[#e4e4e4] border border-[#b8b8b8] flex items-center justify-center"><span class="w-[12px] h-[12px] border border-[#444] bg-[#808000]"></span></span><span class="w-[14px] h-[14px] ml-[2px] bg-white border border-[#555]"><svg class="w-[12px] h-[12px]"><use href="#check"/></svg></span><span class="ml-[2px]">Blinde/Vergrabene DuKo's</span></div>
				<div class="flex h-[18px] items-center"><span class="w-[18px] h-[18px] bg-[#e4e4e4] border border-[#b8b8b8] flex items-center justify-center"><span class="w-[12px] h-[12px] border border-[#444] bg-[#00a0a0]"></span></span><span class="w-[14px] h-[14px] ml-[2px] bg-white border border-[#555]"><svg class="w-[12px] h-[12px]"><use href="#check"/></svg></span><span class="ml-[2px]">Micro Durchkontaktierungen</span></div>
				<div class="flex h-[18px] items-center"><span class="w-[18px] h-[18px] bg-[#e4e4e4] border border-[#b8b8b8] flex items-center justify-center"><span class="w-[12px] h-[12px] border border-[#444] bg-white"></span></span><span class="w-[14px] h-[14px] ml-[2px] bg-white border border-[#555]"><svg class="w-[12px] h-[12px]"><use href="#check"/></svg></span><span class="ml-[2px]">Netzlinien</span></div>
				<div class="flex h-[18px] items-center"><span class="w-[18px] h-[18px] bg-[#e4e4e4] border border-[#b8b8b8] flex items-center justify-center"><span class="w-[12px] h-[12px] border border-[#444] bg-[#a00000]"></span></span><span class="w-[14px] h-[14px] ml-[2px] bg-white border border-[#555]"><svg class="w-[12px] h-[12px]"><use href="#check"/></svg></span><span class="ml-[2px]">Pads - vorderseitig</span></div>
				<div class="flex h-[18px] items-center"><span class="w-[18px] h-[18px] bg-[#e4e4e4] border border-[#b8b8b8] flex items-center justify-center"><span class="w-[12px] h-[12px] border border-[#444] bg-[#00a000]"></span></span><span class="w-[14px] h-[14px] ml-[2px] bg-white border border-[#555]"><svg class="w-[12px] h-[12px]"><use href="#check"/></svg></span><span class="ml-[2px]">Pads - rückseitig</span></div>
				<div class="flex h-[18px] items-center"><span class="w-[18px] h-[18px] bg-[#e4e4e4] border border-[#b8b8b8] flex items-center justify-center"><span class="w-[12px] h-[12px] border border-[#444] bg-[#c0c0c0]"></span></span><span class="w-[14px] h-[14px] ml-[2px] bg-white border border-[#555]"><svg class="w-[12px] h-[12px]"><use href="#check"/></svg></span><span class="ml-[2px]">Text - vorderseitig</span></div>
				<div class="flex h-[18px] items-center"><span class="w-[18px] h-[18px] bg-[#e4e4e4] border border-[#b8b8b8] flex items-center justify-center"><span class="w-[12px] h-[12px] border border-[#444] bg-[#0000c0]"></span></span><span class="w-[14px] h-[14px] ml-[2px] bg-white border border-[#555]"><svg class="w-[12px] h-[12px]"><use href="#check"/></svg></span><span class="ml-[2px]">Text - rückseitig</span></div>
				<div class="flex h-[18px] items-center"><span class="w-[18px] h-[18px] bg-[#e4e4e4] border border-[#b8b8b8] flex items-center justify-center"><span class="w-[12px] h-[12px] border border-[#444] bg-[#808080]"></span></span><span class="w-[14px] h-[14px] ml-[2px] bg-white border border-[#555]"><svg class="w-[12px] h-[12px]"><use href="#check"/></svg></span><span class="ml-[2px]">Versteckter Text</span></div>
				<div class="flex h-[18px] items-center"><span class="w-[18px] h-[18px] bg-[#e4e4e4] border border-[#b8b8b8] flex items-center justify-center"><span class="w-[12px] h-[12px] border border-[#444] bg-[#0000c0]"></span></span><span class="w-[14px] h-[14px] ml-[2px] bg-white border border-[#555]"><svg class="w-[12px] h-[12px]"><use href="#check"/></svg></span><span class="ml-[2px]">Anker</span></div>
				<div class="flex h-[18px] items-center"><span class="w-[18px] h-[18px] bg-[#e4e4e4] border border-[#b8b8b8] flex items-center justify-center"><span class="w-[12px] h-[12px] border border-[#444] bg-[#808080]"></span></span><span class="w-[14px] h-[14px] ml-[2px] bg-white border border-[#555]"><svg class="w-[12px] h-[12px]"><use href="#check"/></svg></span><span class="ml-[2px]">Raster</span></div>
				<div class="flex h-[18px] items-center pl-[18px]"><span class="w-[14px] h-[14px] ml-[2px] bg-white border border-[#555]"><svg class="w-[12px] h-[12px]"><use href="#check"/></svg></span><span class="ml-[2px]">Nicht-Angeschlossen</span></div>
				<div class="flex h-[18px] items-center pl-[18px]"><span class="w-[14px] h-[14px] ml-[2px] bg-white border border-[#555]"><svg class="w-[12px] h-[12px]"><use href="#check"/></svg></span><span class="ml-[2px]">Bauteile - vorderseitig</span></div>
				<div class="flex h-[18px] items-center pl-[18px]"><span class="w-[14px] h-[14px] ml-[2px] bg-white border border-[#555]"><svg class="w-[12px] h-[12px]"><use href="#check"/></svg></span><span class="ml-[2px]">Bauteile - rückseitig</span></div>
				<div class="flex h-[18px] items-center pl-[18px]"><span class="w-[14px] h-[14px] ml-[2px] bg-white border border-[#555]"><svg class="w-[12px] h-[12px]"><use href="#check"/></svg></span><span class="ml-[2px]">Werte</span></div>
				<div class="flex h-[18px] items-center pl-[18px]"><span class="w-[14px] h-[14px] ml-[2px] bg-white border border-[#555]"><svg class="w-[12px] h-[12px]"><use href="#check"/></svg></span><span class="ml-[2px]">Referenzen</span></div>
			</div>
			<!-- Rollbalken der Liste -->
			<div class="absolute left-[3px] right-[3px] bottom-[4px] h-[17px] border-t border-white">
				<svg class="absolute left-[8px] top-[4px] w-[6px] h-[9px]" viewBox="0 0 6 10"><path d="M5 1L1 5l4 4" fill="none" stroke="#555" stroke-width="2"/></svg>
				<div class="absolute left-[19px] top-[1px] w-[157px] h-[15px] bg-[#cdcdcd]"></div>
				<svg class="absolute left-[187px] top-[4px] w-[6px] h-[9px]" viewBox="0 0 6 10"><path d="M1 1l4 4-4 4" fill="none" stroke="#555" stroke-width="2"/></svg>
			</div>
		</div>
	</div>
</div>

<!-- Meldungsfeld -->
<div class="h-[33px] border-b-2 border-[#a8a8a8] flex pl-[11px] text-[12px] leading-[15px] pt-[2px] tracking-[-0.4px] font-['Open_Sans'] text-[#064a3c]">
	<div class="w-[54px]"><div>Pads</div><div>180</div></div>
	<div class="w-[105px]"><div>Durchkontakt.</div><div>0</div></div>
	<div class="w-[85px]"><div>Leiterb.seg</div><div>90</div></div>
	<div class="w-[67px]"><div>Knoten</div><div>180</div></div>
	<div class="w-[59px] text-[#a00000]"><div>Netze</div><div>91</div></div>
	<div class="w-[104px]"><div>Verbindungen</div><div>90</div></div>
	<div class="w-[86px]"><div>verbunden</div><div>90</div></div>
	<div class="text-[#1818c0]"><div>Nicht verbunden</div><div>0</div></div>
</div>

<!-- Statusleiste -->
<div class="flex h-[23px] items-end pl-[959px] text-[12px] tracking-[-0.5px]">
	<div class="w-[69px] h-[21px] border-l border-[#d0d0d0] pl-[3px] leading-[20px]">Z 22</div>
	<div class="w-[176px] h-[21px] border-l border-[#d0d0d0] pl-[4px] leading-[20px] whitespace-pre">X 38,100  Y 26,670</div>
	<div class="w-[200px] h-[21px] border-l border-[#d0d0d0] pl-[4px] leading-[20px] whitespace-pre">dx 38,100  dy 26,670</div>
	<div class="w-[75px] h-[21px] border-x border-[#d0d0d0] pl-[4px] leading-[20px]">mm</div>
</div>

</body>
</html>
